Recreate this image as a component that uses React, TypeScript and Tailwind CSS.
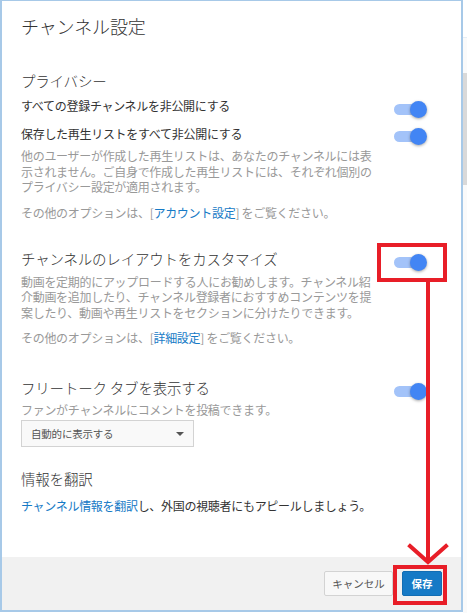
import React from 'react';

const Toggle = ({ className = '' }: { className?: string }) => (
  <div className={`relative w-[33px] h-[17px] shrink-0 ${className}`}>
    <div className="absolute left-0 top-[3px] w-[28px] h-[11px] rounded-full bg-[#a3c3f9]" />
    <div className="absolute right-0 top-0 w-[17px] h-[17px] rounded-full bg-[#4285f4] shadow-[0_1px_3px_rgba(0,0,0,0.35)]" />
  </div>
);

const Annotation = () => (
  <svg width="467" height="613" viewBox="0 0 467 613" className="absolute inset-0 pointer-events-none">
    <g stroke="#e81e28" strokeWidth="4" fill="none">
      <rect x="379" y="245" width="66" height="35" />
      <line x1="428" y1="282" x2="428" y2="561" />
      <polyline points="410,546 428,562 446,546" strokeLinecap="square" />
      <rect x="395" y="567" width="50" height="36" />
    </g>
  </svg>
);

export default function App() {
  return (
    <div className="relative w-[467px] h-[613px] bg-white flex font-['Noto_Sans_CJK_JP','Liberation_Sans',sans-serif] text-[#333]">
      <div className="w-[463px] h-[612px] border-t border-l-2 border-r-2 border-b-2 border-[#a7c9e8] flex flex-col">
        <div className="flex-1 flex flex-col px-[19px] pt-[13px]">
          <h1 className="text-[18px] leading-[24px] tracking-[-0.1px] font-light">チャンネル設定</h1>

          <h2 className="mt-[33px] text-[14.5px] leading-[20px] tracking-[-0.2px] font-light">プライバシー</h2>
          <div className="mt-[1px] flex items-center justify-between pr-[15px]">
            <span className="text-[12px] leading-[28px] tracking-[-0.3px]">すべての登録チャンネルを非公開にする</span>
            <Toggle className="mt-[6px]" />
          </div>
          <div className="flex items-center justify-between pr-[15px]">
            <span className="text-[12px] leading-[28px] tracking-[-0.3px]">保存した再生リストをすべて非公開にする</span>
            <Toggle className="mt-[4px]" />
          </div>
          <p className="text-[12px] leading-[15.5px] tracking-[-0.3px] text-[#999] whitespace-nowrap">
            他のユーザーが作成した再生リストは、あなたのチャンネルには表<br />
            示されません。ご自身で作成した再生リストには、それぞれ個別の<br />
            プライバシー設定が適用されます。
          </p>
          <p className="mt-[10px] text-[12px] leading-[15px] tracking-[-0.3px] text-[#999]">
            その他のオプションは、[<span className="text-[#167ac6]">アカウント設定</span>] をご覧ください。
          </p>

          <div className="mt-[28px] flex items-center justify-between pr-[15px]">
            <h2 className="text-[14.5px] leading-[20px] tracking-[-0.2px] font-light">チャンネルのレイアウトをカスタマイズ</h2>
            <Toggle className="mt-[6px]" />
          </div>
          <p className="mt-[3px] text-[12px] leading-[15.5px] tracking-[-0.3px] text-[#999] whitespace-nowrap">
            動画を定期的にアップロードする人にお勧めします。チャンネル紹<br />
            介動画を追加したり、チャンネル登録者におすすめコンテンツを提<br />
            案したり、動画や再生リストをセクションに分けたりできます。
          </p>
          <p className="mt-[10px] text-[12px] leading-[15px] tracking-[-0.3px] text-[#999]">
            その他のオプションは、[<span className="text-[#167ac6]">詳細設定</span>] をご覧ください。
          </p>

          <div className="mt-[30px] flex items-center justify-between pr-[15px]">
            <h2 className="text-[14.5px] leading-[20px] tracking-[-0.2px] font-light">フリートーク タブを表示する</h2>
            <Toggle className="mt-[8px]" />
          </div>
          <p className="mt-[2px] text-[12px] leading-[15px] tracking-[-0.3px] text-[#999]">ファンがチャンネルにコメントを投稿できます。</p>
          <div className="mt-[3px] w-[173px] h-[27px] border border-[#d3d3d3] bg-[#f9f9f9] flex items-center justify-between pl-[9px] pr-[9px]">
            <span className="text-[10.5px] text-[#555] tracking-[-0.2px]">自動的に表示する</span>
            <svg width="8" height="4" viewBox="0 0 8 4"><path d="M0 0h8L4 4z" fill="#555" /></svg>
          </div>

          <h2 className="mt-[22px] text-[14.5px] leading-[20px] tracking-[-0.2px] font-light">情報を翻訳</h2>
          <p className="mt-[9px] text-[12px] leading-[15px] tracking-[-0.3px] text-[#333]">
            <span className="text-[#167ac6]">チャンネル情報を翻訳</span>し、外国の視聴者にもアピールしましょう。
          </p>
        </div>

        <div className="h-[53px] bg-[#f1f1f1] flex items-start justify-end gap-[9px] pt-[14px] pr-[19px]">
          <button className="w-[69px] h-[25px] rounded-[2px] border border-[#d3d3d3] bg-[#f8f8f8] text-[10.5px] text-[#555]">キャンセル</button>
          <button className="w-[40px] h-[25px] rounded-[2px] border border-[#126db3] bg-[#167ac6] text-[10.5px] font-bold text-white">保存</button>
        </div>
      </div>

      <div className="w-[4px] flex flex-col">
        <div className="h-[38px] bg-white border-b border-[#e6eef6]" />
        <div className="h-[35px] bg-[#fafafa]" />
        <div className="h-[112px] bg-[#d9d9d9]" />
        <div className="flex-1 bg-[#fafafa]" />
      </div>

      <Annotation />
    </div>
  );
}
